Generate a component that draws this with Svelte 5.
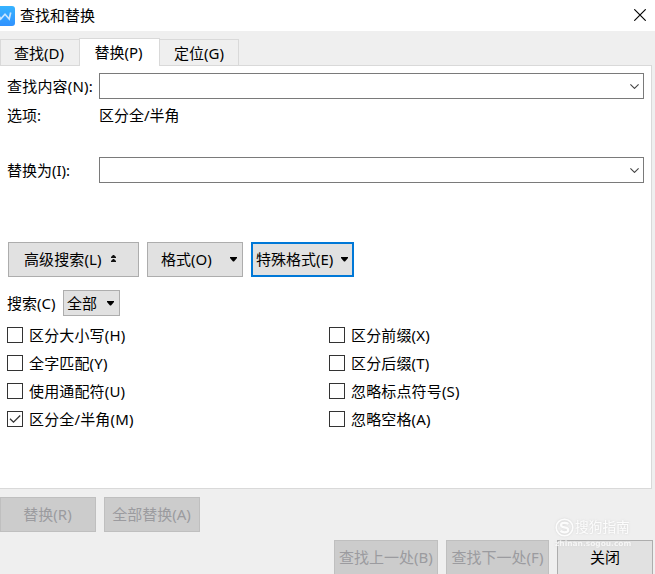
<script>
  const tabs = ['查找(D)', '替换(P)', '定位(G)'];
  let active = $state(1);
  let left = $state([
    { label: '区分大小写(H)', on: false },
    { label: '全字匹配(Y)', on: false },
    { label: '使用通配符(U)', on: false },
    { label: '区分全/半角(M)', on: true }
  ]);
  let right = $state([
    { label: '区分前缀(X)', on: false },
    { label: '区分后缀(T)', on: false },
    { label: '忽略标点符号(S)', on: false },
    { label: '忽略空格(A)', on: false }
  ]);
</script>

{#snippet combo()}
  <div class="combo">
    <svg width="9" height="5" viewBox="0 0 9 5"><path d="M.4 .4 4.500 4.400 8.600 .4" fill="none" stroke="#444" stroke-width="1.1" /></svg>
  </div>
{/snippet}

{#snippet arrow()}
  <svg class="arrow" width="7" height="5" viewBox="0 0 7 5"><path d="M0 0H7V1L4 4.500H3L0 1Z" fill="#000" /></svg>
{/snippet}

{#snippet column(items)}
  <div class="column">
    {#each items as item}
      <button class="check" role="checkbox" aria-checked={item.on} onclick={() => (item.on = !item.on)}>
        <span class="box">
          {#if item.on}
            <svg width="14" height="14" viewBox="0 0 14 14"><path d="M2 6.700 5.500 10.200 12.200 3.500" fill="none" stroke="#333" stroke-width="1.3" /></svg>
          {/if}
        </span>
        <span>{item.label}</span>
      </button>
    {/each}
  </div>
{/snippet}

<div class="dialog">
  <header>
    <svg class="logo" width="15" height="20" viewBox="0 0 15 20">
      <defs>
        <linearGradient id="blue" x1="0" y1="0" x2="0" y2="1">
          <stop offset="0" stop-color="#36b3ff" />
          <stop offset="1" stop-color="#3092ff" />
        </linearGradient>
      </defs>
      <path d="M0 0H12Q15 0 15 3V17Q15 20 12 20H0Z" fill="url(#blue)" />
      <path d="M-1 10 .7 13 5 8.300 9.200 13 10.700 6.500" fill="none" stroke="#c8e5ff" stroke-width="1.700" />
    </svg>
    <span class="title">查找和替换</span>
    <svg class="close" width="12" height="12" viewBox="0 0 12 12"><path d="M.3 .3 11.700 11.700M11.700 .3 .3 11.700" stroke="#000" stroke-width="1.15" /></svg>
  </header>

  <nav>
    {#each tabs as tab, i}
      <button class="tab" class:active={active === i} onclick={() => (active = i)}>{tab}</button>
    {/each}
  </nav>

  <main>
    <div class="field"><span class="name wide">查找内容(N):</span>{@render combo()}</div>
    <div class="options"><span class="name">选项:</span><span>区分全/半角</span></div>
    <div class="field second"><span class="name">替换为(I):</span>{@render combo()}</div>

    <div class="actions">
      <button class="btn advanced">
        <span>高级搜索(L)</span>
        <svg width="5" height="8" viewBox="0 0 5 8"><path d="M2 0H3L5 2V3H0V2ZM2 4H3L5 6V7H0V6Z" fill="#111" /></svg>
      </button>
      <button class="btn format"><span>格式(O)</span>{@render arrow()}</button>
      <button class="btn special"><span>特殊格式(E)</span>{@render arrow()}</button>
    </div>

    <div class="scope">
      <span>搜索(C)</span>
      <button class="btn select"><span>全部</span>{@render arrow()}</button>
    </div>

    <div class="checks">
      {@render column(left)}
      {@render column(right)}
    </div>
  </main>

  <footer>
    <div class="row">
      <button class="btn off replace" disabled>替换(R)</button>
      <button class="btn off replace" disabled>全部替换(A)</button>
    </div>
    <div class="row end">
      <button class="btn off prev" disabled>查找上一处(B)</button>
      <button class="btn off next" disabled>查找下一处(F)</button>
      <button class="btn shut">关闭</button>
    </div>
    <div class="mark">
      <div class="brand">
        <svg width="19" height="19" viewBox="0 0 19 19">
          <circle cx="9.500" cy="9.500" r="8.300" fill="none" stroke="#fff" stroke-width="1.5" />
          <path d="M13.300 6Q12 4.800 9.500 4.800 6 4.800 6 7.100 6 8.900 9.500 9.400 13.200 10 13.200 12 13.200 14.300 9.500 14.300 7 14.300 5.500 12.900" fill="none" stroke="#fff" stroke-width="2.200" />
        </svg>
        <span>搜狗指南</span>
      </div>
      <div class="site">zhinan.sogou.com</div>
    </div>
  </footer>
</div>

<style>
  :global(body) { background: #efefef; overflow: hidden; }
  .dialog {
    width: 655px;
    height: 574px;
    overflow: hidden;
    position: relative;
    display: flex;
    flex-direction: column;
    background: #efefef;
    color: #000;
    font: 15px/20px 'Noto Sans', 'Noto Sans CJK SC', sans-serif;
    white-space: nowrap;
  }
  .dialog * { box-sizing: border-box; }
  svg { display: block; flex: none; }
  button { font: inherit; color: inherit; margin: 0; padding: 0; white-space: nowrap; border-radius: 0; }
  header { height: 31px; flex: none; background: #fff; display: flex; align-items: center; }
  .title { margin-left: 5px; padding-bottom: 2px; }
  .close { margin: 0 9px 1px auto; }
  nav { height: 35px; display: flex; align-items: flex-end; flex: none; position: relative; margin-bottom: -1px; }
  .tab { width: 80px; height: 26px; border: 1px solid #d9d9d9; border-bottom: 0; background: #efefef; margin-bottom: 1px; padding: 0 2px 0 0; }
  .tab:last-child { margin-left: -1px; padding-right: 0; }
  .tab.active { width: 81px; height: 28px; background: #fff; margin: 0 0 0 -1px; padding: 0 2px 1px 0; }
  main { width: 652px; height: 424px; flex: none; background: #fff; border: 1px solid #d9d9d9; border-left: 0; padding: 7px 7px 0; }
  .field { height: 26px; display: flex; align-items: center; }
  .name { width: 92px; flex: none; }
  .wide { letter-spacing: .2px; }
  .combo { width: 545px; height: 26px; border: 1px solid #7a7a7a; display: flex; align-items: center; justify-content: flex-end; padding: 1px 4px 0 0; }
  .options { display: flex; height: 20px; margin-top: 6px; }
  .second { margin-top: 32px; }
  .actions { display: flex; gap: 8px; margin: 59px 0 0 1px; }
  .btn { height: 35px; border: 1px solid #adadad; background: #e1e1e1; display: flex; align-items: center; padding-bottom: 2px; }
  .btn .arrow { margin-top: 2px; }
  .advanced { width: 131px; padding-left: 15px; gap: 9px; letter-spacing: .1px; }
  .advanced svg { margin-top: 1px; }
  .format { width: 96px; padding: 0 5px 2px 13px; justify-content: space-between; }
  .special { width: 103px; border: 2px solid #0078d7; padding: 0 4px 2px 3px; justify-content: space-between; }
  .scope { display: flex; align-items: center; margin-top: 13px; }
  .scope > span { width: 56px; }
  .select { width: 57px; height: 26px; padding: 0 5px 0 3px; justify-content: space-between; }
  .select .arrow { margin-top: 0; }
  .checks { display: flex; margin-top: 5px; }
  .column { width: 322px; flex: none; }
  .check { height: 28px; border: 0; background: none; display: flex; align-items: center; gap: 6px; letter-spacing: .15px; }
  .box { width: 16px; height: 16px; border: 1px solid #333; background: #fff; flex: none; }
  footer { padding-top: 8px; position: relative; }
  .row { display: flex; gap: 8px; }
  .end { margin-top: 8px; padding-left: 334px; }
  .off { background: #ccc; border-color: #bfbfbf; color: #9b9b9f; justify-content: center; padding-right: 1px; }
  .replace { width: 96px; }
  .prev { width: 104px; padding-right: 0; }
  .next { width: 103px; padding-right: 0; }
  .shut { width: 96px; justify-content: center; }
  .mark { position: absolute; left: 555px; top: 28px; color: #fff; opacity: .85; filter: drop-shadow(0 0 1px #d0d0d0); }
  .brand { display: flex; align-items: center; gap: 1px; font-size: 13.700px; height: 20px; }
  .site { font: bold 7.500px/10px 'DejaVu Sans', sans-serif; margin-top: 2px; letter-spacing: -.02px; opacity: .85; }
</style>
